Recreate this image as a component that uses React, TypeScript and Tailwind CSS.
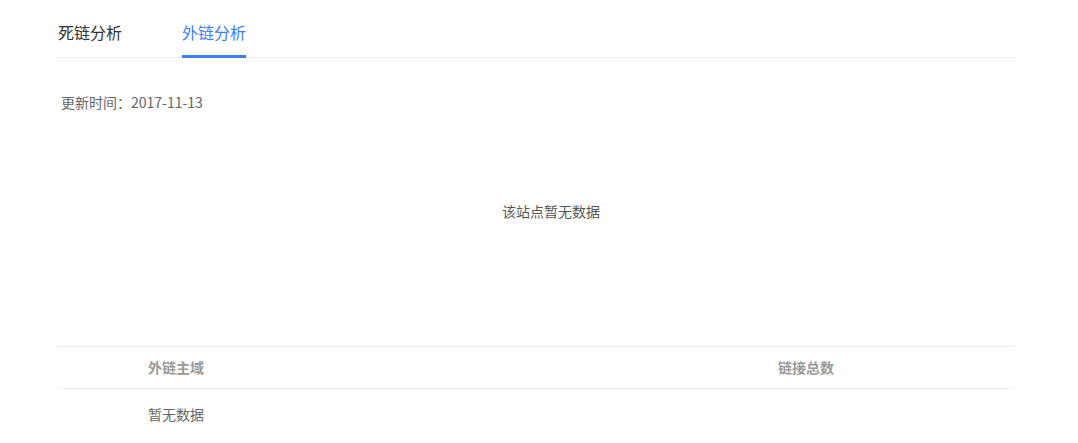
const App = () => {
  return (
    <div
      className="min-h-screen bg-white"
      style={{ fontFamily: '"Noto Sans CJK SC", "Noto Sans", sans-serif' }}
    >
      <div className="ml-[58px] w-[956px]">
        {/* Tabs */}
        <div className="flex h-[58px] border-b border-[#eeeeee]">
          <div className="flex flex-col text-[16px] leading-none text-[#333333]">
            <span className="pt-[24px]">死链分析</span>
          </div>
          <div className="ml-[60px] flex flex-col text-[16px] leading-none text-[#3b80f7]">
            <span className="pt-[24px]">外链分析</span>
            <span className="mt-auto mb-[-1px] h-[3px] bg-[#3b80f7]" />
          </div>
        </div>

        <div className="mt-[36px] pl-[3px] text-[14px] leading-[16px] text-[#666666]">
          更新时间：2017-11-13
        </div>

        <div className="h-[236px] pt-[93px] pl-[30px] text-center text-[14px] leading-[16px] text-[#555555]">
          该站点暂无数据
        </div>

        {/* Table */}
        <div className="border-t border-[#eeeeee]">
          <div className="flex h-[42px] items-center border-b border-[#eeeeee] text-[14px] font-bold text-[#999999]">
            <span className="w-[720px] pl-[90px]">外链主域</span>
            <span>链接总数</span>
          </div>
          <div className="flex h-[52px] items-center pb-[2px] text-[14px] text-[#666666]">
            <span className="pl-[90px]">暂无数据</span>
          </div>
        </div>
      </div>
    </div>
  );
};

export default App;
